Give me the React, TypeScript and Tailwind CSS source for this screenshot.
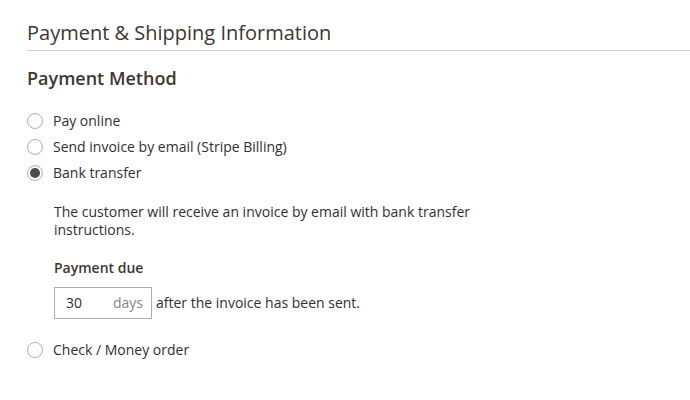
import React from 'react';

type Method = {
  label: string;
  checked?: boolean;
};

const FONT = { fontFamily: '"Open Sans", "Liberation Sans", sans-serif' };

function Radio({ checked }: { checked?: boolean }) {
  return (
    <span className="flex size-4 shrink-0 items-center justify-center rounded-full border border-[#adadad] bg-white">
      {checked && <span className="size-[10px] rounded-full bg-[#514943]" />}
    </span>
  );
}

function MethodRow({ label, checked }: Method) {
  return (
    <label className="flex h-[26px] items-center gap-[10px] text-sm text-[#303030]">
      <Radio checked={checked} />
      <span>{label}</span>
    </label>
  );
}

export default function App() {
  return (
    <div className="min-h-[400px] bg-white pl-[27px] pt-[21px] text-[#303030]" style={FONT}>
      <h1 className="border-b border-[#cccccc] pb-[5px] text-[20px] leading-[24px] font-normal text-[#41362f]">
        Payment &amp; Shipping Information
      </h1>

      <h2 className="mt-[15px] text-[18px] leading-[24px] font-semibold text-[#41362f]">
        Payment Method
      </h2>

      <div className="mt-[18px] flex flex-col">
        <MethodRow label="Pay online" />
        <MethodRow label="Send invoice by email (Stripe Billing)" />
        <MethodRow label="Bank transfer" checked />
      </div>

      <div className="pl-[27px]">
        <p className="mt-[17px] max-w-[430px] text-sm leading-[18px]">
          The customer will receive an invoice by email with bank transfer instructions.
        </p>

        <div className="mt-[20px] text-sm leading-[18px] font-semibold text-[#41362f]">Payment due</div>

        <div className="mt-[10px] flex items-center gap-[4px] text-sm">
          <div className="flex h-[32px] w-[98px] items-center justify-between border border-[#adadad] pl-[11px] pr-[8px]">
            <span>30</span>
            <span className="text-[#858585]">days</span>
          </div>
          <span>after the invoice has been sent.</span>
        </div>
      </div>

      <div className="mt-[18px] flex flex-col">
        <MethodRow label="Check / Money order" />
      </div>
    </div>
  );
}
